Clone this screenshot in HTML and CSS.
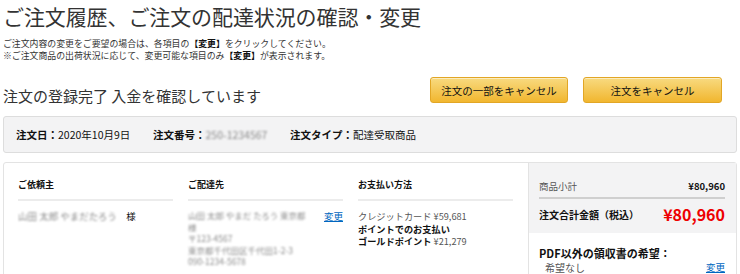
FILE: index.html
```html
<!DOCTYPE html>
<html lang="ja">
<head>
<meta charset="utf-8">
<title>ご注文履歴</title>
<link rel="stylesheet" href="styles.css">
</head>
<body>
<div class="page">
  <h1 class="title">ご注文履歴、ご注文の配達状況の確認・変更</h1>
  <p class="note">ご注文内容の変更をご要望の場合は、各項目の<b>【変更】</b>をクリックしてください。</p>
  <p class="note">※ご注文商品の出荷状況に応じて、変更可能な項目のみ<b>【変更】</b>が表示されます。</p>

  <div class="status-row">
    <h2 class="status">注文の登録完了 入金を確認しています</h2>
    <div class="actions">
      <button class="btn btn-partial">注文の一部をキャンセル</button>
      <button class="btn btn-all">注文をキャンセル</button>
    </div>
  </div>

  <div class="infobar">
    <span class="info"><b>注文日：</b>2020年10月9日</span>
    <span class="info"><b>注文番号：</b><span class="blur">250-1234567</span></span>
    <span class="info"><b>注文タイプ：</b>配達受取商品</span>
  </div>

  <div class="orderbox">
    <div class="cols">
      <div class="col">
        <div class="col-head">ご依頼主</div>
        <div class="col-body"><span class="blur">山田 太郎 やまだたろう</span>　様</div>
      </div>
      <div class="col">
        <div class="col-head">ご配達先</div>
        <div class="col-body ship">
          <div class="ship-text blur">
            <div>山田 太郎 やまだ たろう 東京都</div>
            <div>様</div>
            <div>〒123-4567</div>
            <div>東京都千代田区千代田1-2-3</div>
            <div>090-1234-5678</div>
          </div>
          <a class="link" href="#">変更</a>
        </div>
      </div>
      <div class="col">
        <div class="col-head">お支払い方法</div>
        <div class="col-body pay">
          <div class="muted">クレジットカード ¥59,681</div>
          <div><b>ポイントでのお支払い</b></div>
          <div><b>ゴールドポイント</b> <span class="muted">¥21,279</span></div>
        </div>
      </div>
    </div>
    <div class="summary">
      <div class="sum-grey">
        <div class="sum-row sub"><span class="muted">商品小計</span><b>¥80,960</b></div>
        <div class="sum-row total"><b>注文合計金額（税込）</b><b class="price">¥80,960</b></div>
      </div>
      <div class="receipt">
        <div class="receipt-head">PDF以外の領収書の希望：</div>
        <div class="receipt-row"><span class="muted">希望なし</span><a class="link" href="#">変更</a></div>
      </div>
    </div>
  </div>
</div>
</body>
</html>
```

FILE: styles.css
```css
* { box-sizing: border-box; }
html, body { margin: 0; padding: 0; background: #fff; }
body {
  font-family: "Noto Sans CJK JP", "Noto Sans", sans-serif;
  color: #111;
}
.page { padding: 0 3px; }
.title {
  margin: 2px 0 0;
  font-size: 21px;
  line-height: 28px;
  font-weight: 400;
  color: #333;
  letter-spacing: -0.1px;
}
.note {
  margin: 0;
  font-size: 8.9px;
  line-height: 12px;
  color: #333;
}
.note:first-of-type { margin-top: 8px; }
.note b { font-weight: 700; color: #111; }

.status-row {
  display: flex;
  justify-content: space-between;
  align-items: flex-end;
  margin-top: 15px;
}
.status {
  margin: 0;
  font-size: 15px;
  line-height: 20px;
  font-weight: 400;
  color: #333;
  position: relative;
  top: 3px;
}
.actions { display: flex; gap: 15px; padding-right: 15px; }
.btn {
  height: 26px;
  border: 1px solid #e2a625;
  border-radius: 3px;
  background: linear-gradient(#f8da80, #f1b62f);
  font-family: inherit;
  font-size: 10.5px;
  color: #111;
  padding: 0;
  box-shadow: 0 1px 0 rgba(255,255,255,0.5) inset;
}
.btn-partial { width: 138px; }
.btn-all { width: 139px; }

.infobar {
  margin-top: 13px;
  height: 37px;
  background: #f3f3f4;
  border: 1px solid #dddddd;
  border-radius: 3px;
  display: flex;
  align-items: center;
  padding-left: 12px;
  font-size: 10.5px;
  color: #111;
}
.info:nth-child(1) { width: 117px; margin-right: 20px; }
.info:nth-child(2) { width: 117px; margin-right: 20px; }
.info b { font-weight: 700; }

.blur { color: #8a8a8a; filter: blur(0.9px); }

.orderbox {
  margin-top: 9px;
  border: 1px solid #e3e3e3;
  border-radius: 3px;
  display: flex;
  height: 140px;
}
.cols {
  flex: 1;
  display: flex;
  gap: 15px;
  padding: 15px 15px 0 14px;
}
.col { width: 155px; }
.col-head {
  font-size: 9px;
  font-weight: 700;
  color: #111;
  line-height: 14px;
  padding-bottom: 7px;
  border-bottom: 2px solid #ececec;
}
.col-body {
  margin-top: 9px;
  font-size: 9.5px;
  line-height: 12px;
  color: #111;
}
.pay { font-size: 9.2px; line-height: 12.5px; }
.ship { display: flex; justify-content: space-between; }
.ship-text { font-size: 8.5px; line-height: 11.5px; }
.link { color: #0066c0; text-decoration: underline; font-size: 9.5px; }
.muted { color: #555; }
.pay b { font-weight: 700; }

.summary {
  width: 211px;
  border-left: 1px solid #e3e3e3;
  display: flex;
  flex-direction: column;
}
.sum-grey {
  background: #f3f3f4;
  padding: 12px 11px 0 10px;
  height: 70px;
}
.sum-row { display: flex; justify-content: space-between; align-items: center; }
.sub {
  font-size: 9.5px;
  height: 24px;
  border-bottom: 2px solid #cfcfcf;
}
.sub b { font-weight: 700; }
.total { height: 30px; font-size: 10px; }
.price { color: #e00; font-size: 16px; font-weight: 700; }
.receipt { padding: 13px 11px 0 10px; }
.receipt-head { font-size: 11px; font-weight: 700; line-height: 14px; }
.receipt-row {
  display: flex;
  justify-content: space-between;
  font-size: 10px;
  line-height: 13px;
  margin-top: 1px;
  padding-left: 6px;
}
```
